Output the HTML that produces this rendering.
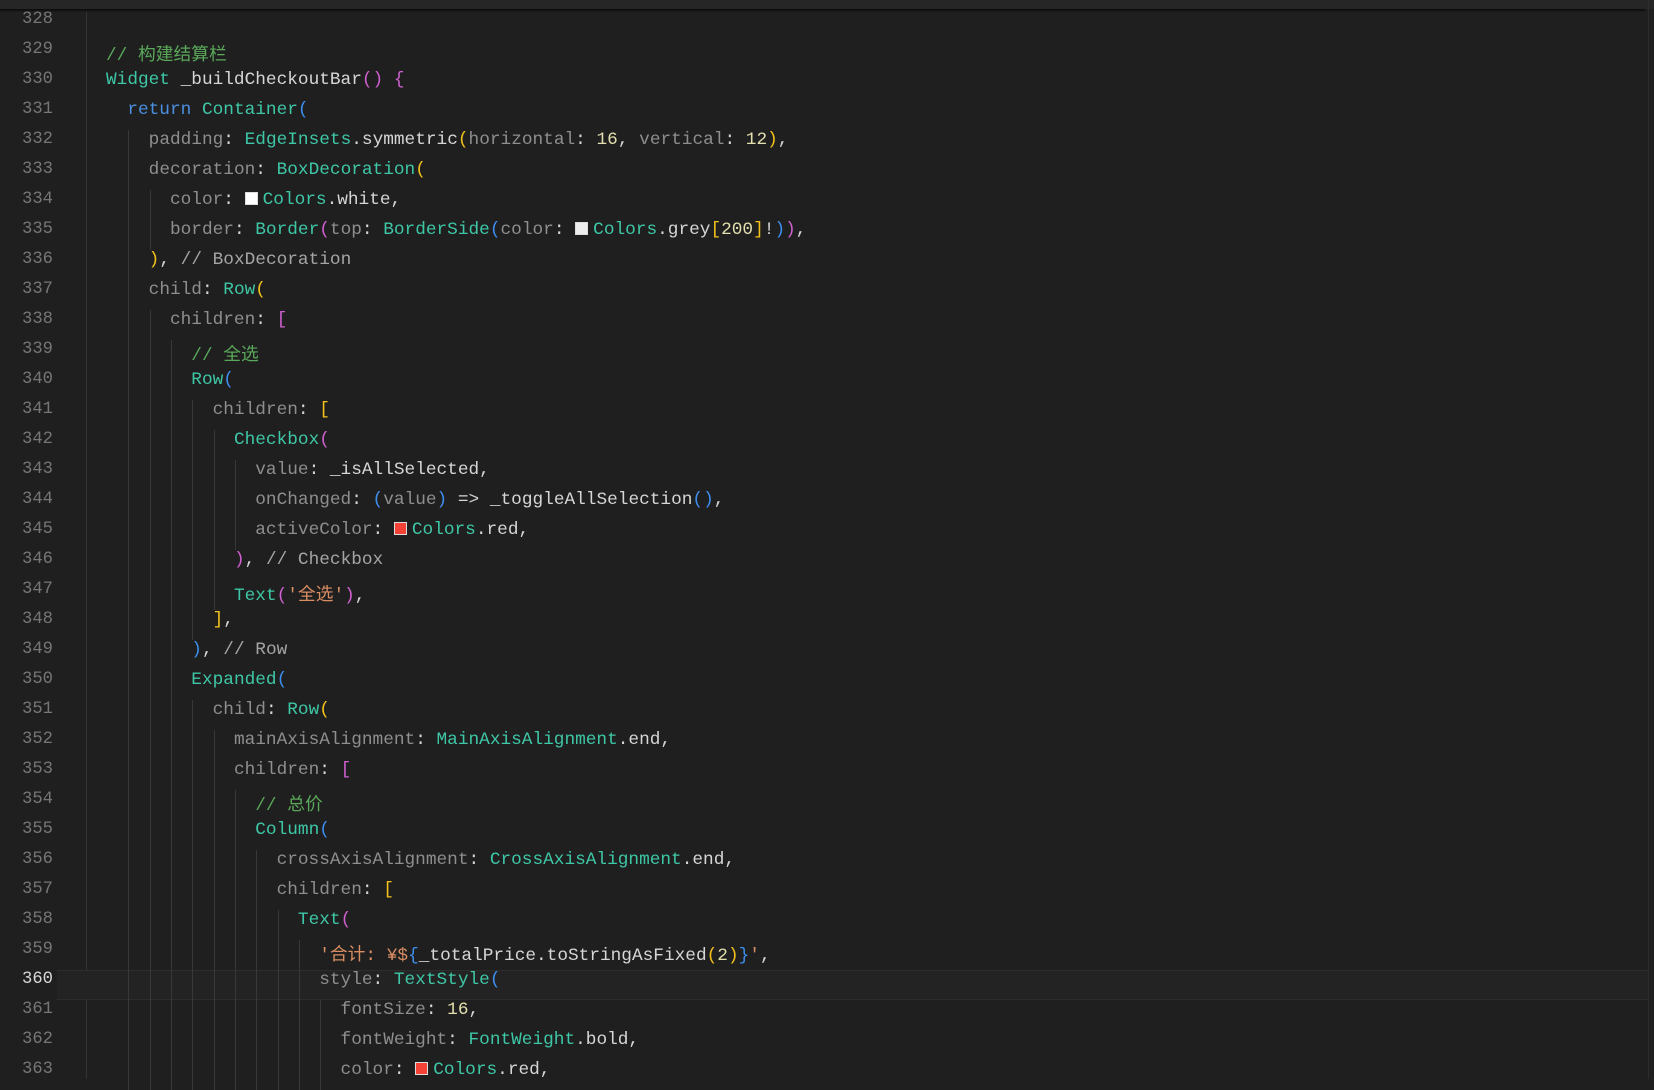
<!DOCTYPE html>
<html><head><meta charset="utf-8"><style>
html,body{margin:0;padding:0;width:1654px;height:1079px;overflow:hidden;background:#1f1f1f;}
.top{position:absolute;left:0;top:0;width:1654px;height:9px;background:#262626;}
.sh{position:absolute;left:0;top:9px;width:1645px;height:3px;background:linear-gradient(#0a0a0a,#1f1f1f);}
.gut{position:absolute;left:86px;top:12px;width:1px;height:1067px;background:#333;}
.rb{position:absolute;left:1648px;top:0;width:1px;height:1079px;background:#2c2c2c;}
.hl{position:absolute;left:57px;top:970px;width:1591px;height:28px;background:#232323;border-top:1px solid #2d2d2d;border-bottom:1px solid #2d2d2d;}
.ln{position:absolute;left:0;width:53px;text-align:right;height:30px;line-height:30px;font:17.2px "Liberation Mono",monospace;color:#767676;}
.ln.cur{color:#d8d8d8;}
.code{position:absolute;left:106px;height:30px;line-height:30px;white-space:pre;font:17.78px "Liberation Mono","Noto Sans CJK SC",monospace;color:#d6d6d6;}
.gd{position:absolute;width:1px;height:30px;background:#383838;}
.k{color:#3ec7a6}.r{color:#4a8fe0}.p{color:#8e8e8e}.n{color:#e3dfae}.s{color:#d98d63}.c{color:#5aa85a}.g{color:#a5a5a5}
.y{color:#f2c21a}.m{color:#d05fd0}.b{color:#3d8fef}
.sw{display:inline-block;width:13px;height:13px;margin-right:5px;vertical-align:-1px;border:1px solid #ddd;box-sizing:border-box}
</style></head><body>
<div class="top"></div><div class="sh"></div><div class="gut"></div><div class="rb"></div>
<div class="hl"></div>
<div id="g"></div>
<div class="ln" style="top:10px">328</div>
<div class="ln" style="top:40px">329</div><div class="code" style="top:40px"><span class="c">// 构建结算栏</span></div>
<div class="ln" style="top:70px">330</div><div class="code" style="top:70px"><span class="k">Widget</span> _buildCheckoutBar<span class="m">()</span> <span class="m">{</span></div>
<div class="ln" style="top:100px">331</div><div class="code" style="top:100px">  <span class="r">return</span> <span class="k">Container</span><span class="b">(</span></div>
<div class="ln" style="top:130px">332</div><div class="code" style="top:130px">    <span class="p">padding</span>: <span class="k">EdgeInsets</span>.symmetric<span class="y">(</span><span class="p">horizontal</span>: <span class="n">16</span>, <span class="p">vertical</span>: <span class="n">12</span><span class="y">)</span>,</div>
<div class="ln" style="top:160px">333</div><div class="code" style="top:160px">    <span class="p">decoration</span>: <span class="k">BoxDecoration</span><span class="y">(</span></div>
<div class="ln" style="top:190px">334</div><div class="code" style="top:190px">      <span class="p">color</span>: <span class="sw" style="background:#fff"></span><span class="k">Colors</span>.white,</div>
<div class="ln" style="top:220px">335</div><div class="code" style="top:220px">      <span class="p">border</span>: <span class="k">Border</span><span class="m">(</span><span class="p">top</span>: <span class="k">BorderSide</span><span class="b">(</span><span class="p">color</span>: <span class="sw" style="background:#eee"></span><span class="k">Colors</span>.grey<span class="y">[</span><span class="n">200</span><span class="y">]</span>!<span class="b">)</span><span class="m">)</span>,</div>
<div class="ln" style="top:250px">336</div><div class="code" style="top:250px">    <span class="y">)</span>, <span class="g">// BoxDecoration</span></div>
<div class="ln" style="top:280px">337</div><div class="code" style="top:280px">    <span class="p">child</span>: <span class="k">Row</span><span class="y">(</span></div>
<div class="ln" style="top:310px">338</div><div class="code" style="top:310px">      <span class="p">children</span>: <span class="m">[</span></div>
<div class="ln" style="top:340px">339</div><div class="code" style="top:340px">        <span class="c">// 全选</span></div>
<div class="ln" style="top:370px">340</div><div class="code" style="top:370px">        <span class="k">Row</span><span class="b">(</span></div>
<div class="ln" style="top:400px">341</div><div class="code" style="top:400px">          <span class="p">children</span>: <span class="y">[</span></div>
<div class="ln" style="top:430px">342</div><div class="code" style="top:430px">            <span class="k">Checkbox</span><span class="m">(</span></div>
<div class="ln" style="top:460px">343</div><div class="code" style="top:460px">              <span class="p">value</span>: _isAllSelected,</div>
<div class="ln" style="top:490px">344</div><div class="code" style="top:490px">              <span class="p">onChanged</span>: <span class="b">(</span><span class="p">value</span><span class="b">)</span> =&gt; _toggleAllSelection<span class="b">()</span>,</div>
<div class="ln" style="top:520px">345</div><div class="code" style="top:520px">              <span class="p">activeColor</span>: <span class="sw" style="background:#f44336"></span><span class="k">Colors</span>.red,</div>
<div class="ln" style="top:550px">346</div><div class="code" style="top:550px">            <span class="m">)</span>, <span class="g">// Checkbox</span></div>
<div class="ln" style="top:580px">347</div><div class="code" style="top:580px">            <span class="k">Text</span><span class="m">(</span><span class="s">'全选'</span><span class="m">)</span>,</div>
<div class="ln" style="top:610px">348</div><div class="code" style="top:610px">          <span class="y">]</span>,</div>
<div class="ln" style="top:640px">349</div><div class="code" style="top:640px">        <span class="b">)</span>, <span class="g">// Row</span></div>
<div class="ln" style="top:670px">350</div><div class="code" style="top:670px">        <span class="k">Expanded</span><span class="b">(</span></div>
<div class="ln" style="top:700px">351</div><div class="code" style="top:700px">          <span class="p">child</span>: <span class="k">Row</span><span class="y">(</span></div>
<div class="ln" style="top:730px">352</div><div class="code" style="top:730px">            <span class="p">mainAxisAlignment</span>: <span class="k">MainAxisAlignment</span>.end,</div>
<div class="ln" style="top:760px">353</div><div class="code" style="top:760px">            <span class="p">children</span>: <span class="m">[</span></div>
<div class="ln" style="top:790px">354</div><div class="code" style="top:790px">              <span class="c">// 总价</span></div>
<div class="ln" style="top:820px">355</div><div class="code" style="top:820px">              <span class="k">Column</span><span class="b">(</span></div>
<div class="ln" style="top:850px">356</div><div class="code" style="top:850px">                <span class="p">crossAxisAlignment</span>: <span class="k">CrossAxisAlignment</span>.end,</div>
<div class="ln" style="top:880px">357</div><div class="code" style="top:880px">                <span class="p">children</span>: <span class="y">[</span></div>
<div class="ln" style="top:910px">358</div><div class="code" style="top:910px">                  <span class="k">Text</span><span class="m">(</span></div>
<div class="ln" style="top:940px">359</div><div class="code" style="top:940px">                    <span class="s">'合计: ¥$</span><span class="b">{</span>_totalPrice.toStringAsFixed<span class="y">(</span><span class="n">2</span><span class="y">)</span><span class="b">}</span><span class="s">'</span>,</div>
<div class="ln cur" style="top:970px">360</div><div class="code" style="top:970px">                    <span class="p">style</span>: <span class="k">TextStyle</span><span class="b">(</span></div>
<div class="ln" style="top:1000px">361</div><div class="code" style="top:1000px">                      <span class="p">fontSize</span>: <span class="n">16</span>,</div>
<div class="ln" style="top:1030px">362</div><div class="code" style="top:1030px">                      <span class="p">fontWeight</span>: <span class="k">FontWeight</span>.bold,</div>
<div class="ln" style="top:1060px">363</div><div class="code" style="top:1060px">                      <span class="p">color</span>: <span class="sw" style="background:#f44336"></span><span class="k">Colors</span>.red,</div>
<div style="position:absolute;left:0;top:0">
<!-- indent guides -->
</div>
<script>
var ind=[0,0,0,1,2,2,3,3,2,2,3,4,4,5,6,7,7,7,6,6,5,4,4,5,6,6,7,7,8,8,9,10,10,11,11,11];
var h='';
for(var i=0;i<ind.length;i++){for(var k=1;k<ind[i];k++){h+='<div class="gd" style="left:'+Math.round(107+k*21.33)+'px;top:'+(10+i*30)+'px"></div>';}}
document.getElementById('g').innerHTML=h;
</script>
</body></html>
